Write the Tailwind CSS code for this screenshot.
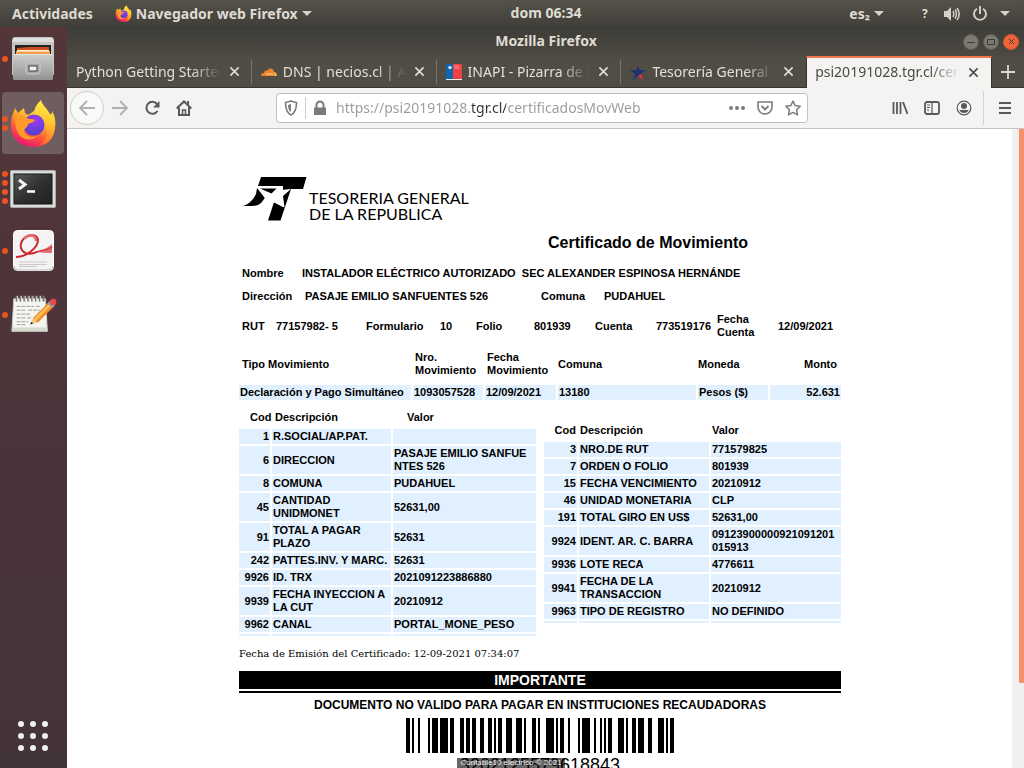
<!DOCTYPE html>
<html lang="es">
<head>
<meta charset="utf-8">
<title>Mozilla Firefox</title>
<script src="https://cdn.jsdelivr.net/npm/@tailwindcss/browser@4"></script>
</head>
<body class="h-screen overflow-hidden flex flex-col bg-[#4a3439] font-['Noto_Sans',sans-serif] text-sm">

<svg class="absolute size-0" aria-hidden="true">
  <defs>
    <linearGradient id="flame" x1=".8" y1="0" x2=".3" y2="1"><stop offset="0" stop-color="#fff44f"/><stop offset=".35" stop-color="#ffb02c"/><stop offset=".65" stop-color="#ff5a36"/><stop offset="1" stop-color="#e5107a"/></linearGradient>
    <linearGradient id="tail" x1=".6" y1="0" x2=".5" y2="1"><stop offset="0" stop-color="#fff04a"/><stop offset=".5" stop-color="#ffc52e"/><stop offset="1" stop-color="#ff6a2c"/></linearGradient>
    <radialGradient id="globe" cx=".55" cy=".25" r=".8"><stop offset="0" stop-color="#a03cf0"/><stop offset="1" stop-color="#4a3fd0"/></radialGradient>
    <linearGradient id="steel" x1="0" y1="0" x2="0" y2="1"><stop offset="0" stop-color="#cfcfcd"/><stop offset="1" stop-color="#929290"/></linearGradient>
    <linearGradient id="screen" x1="0" y1="0" x2="1" y2="1"><stop offset="0" stop-color="#5b5d5c"/><stop offset=".5" stop-color="#303232"/><stop offset="1" stop-color="#1d1f1f"/></linearGradient>
    <symbol id="firefox" viewBox="0 0 48 48">
      <path fill="url(#flame)" d="M5 12l1-3 3 5 6-5 1 5 3 2 6-4 6 2 6 4 7 7c4 12-4 23-19 23C11 48 1 39 2 26c0-6 1-9 3-14z"/>
      <path fill="url(#tail)" d="M32 1c1 5 6 8 9 14 2 1 2-2 2-3 3 5 4 10 3 17-1 9-7 16-15 17 6-4 8-10 6-17-2-7-8-9-12-14 0-6 3-10 7-14z"/>
      <circle cx="25" cy="26" r="10.500" fill="url(#globe)"/>
      <path fill="#ff9a2b" d="M6 17c6-1 10 1 14 3 2 0 5 0 6 1-2 3-5 3-7 4 0 3-3 4-4 6 1 6 7 8 13 6-5 6-15 4-19-3-3-6-3-12-3-17z"/>
    </symbol>
    <symbol id="close" viewBox="0 0 12 12"><path d="M1.500 1.500l9 9M10.500 1.500l-9 9" fill="none" stroke="currentColor" stroke-width="1.700"/></symbol>
  </defs>
</svg>

<!-- System bar -->
<header class="h-[27px] shrink-0 flex items-center justify-between pl-3 pr-[14px] bg-linear-to-b from-[#55524a] to-[#403e39] text-[#dfdbd2] font-bold relative">
  <div class="flex items-center gap-[22px]">
    <button>Actividades</button>
    <button class="flex items-center gap-1"><svg class="size-[17px]"><use href="#firefox"/></svg>Navegador web Firefox
      <svg class="w-[10px] h-[5px]" viewBox="0 0 10 5"><path d="M0 0h10L5 5z" fill="#d5d1c9"/></svg></button>
  </div>
  <button class="absolute left-1/2 top-[3px] w-[72px] -ml-[2px] text-[14px] leading-5 whitespace-nowrap">dom 06:34</button>
  <div class="flex items-center">
    <button class="flex items-center gap-1">es₂ <svg class="w-[10px] h-[5px]" viewBox="0 0 10 5"><path d="M0 0h10L5 5z" fill="#d5d1c9"/></svg></button>
    <span class="ml-[38px] w-[10px] text-xs">?</span>
    <button aria-label="Volumen" class="ml-3"><svg class="w-4 h-4" viewBox="0 0 16 16"><path d="M0 5h3l4-4v14l-4-4H0z" fill="#d5d1c9"/><path d="M9 5c1 2 1 4 0 6M11 3.500c2 3 2 6 0 9M13 2c3 4 3 8 0 12" fill="none" stroke="#d5d1c9" stroke-width="1.500"/></svg></button>
    <button aria-label="Sistema" class="ml-3 flex items-center gap-3"><svg class="size-4" viewBox="0 0 16 16"><path d="M5 2.700a6 6 0 1 0 6 0M8 0v8" fill="none" stroke="#d5d1c9" stroke-width="1.900"/></svg>
      <svg class="w-[10px] h-[5px]" viewBox="0 0 10 5"><path d="M0 0h10L5 5z" fill="#d5d1c9"/></svg></button>
  </div>
</header>

<div class="flex-1 min-h-0 flex">
  <!-- Dock -->
  <nav class="w-[67px] shrink-0 flex flex-col gap-[2px] px-[2px] pt-px bg-linear-to-b from-[#543639] via-[#4b3439] to-[#43333a]">
    <button aria-label="Archivos" class="h-[62px] w-[62px] flex items-center">
      <span class="w-[7px] flex flex-col gap-[3px]"><i class="size-[6px] rounded-full bg-[#e95420]"></i></span>
      <svg class="w-[48px] h-[48px]" viewBox="0 0 48 48"><path d="M4 3q0-1 2-1h36q2 0 2 1l1 3v34H3V6z" fill="#c5c5c3"/><path d="M4 3h40l1 4H3z" fill="#dededc"/><path d="M6 10h36v10H6z" fill="#222"/><path d="M8 13l12-1h20v8H8z" fill="#c9501e"/><path d="M7 16h34v4H7z" fill="#f4a04a"/><path d="M8 15h32v1.500H8z" fill="#fff0d8"/><path d="M5 19h38l1 3v22q0 1-2 1H6q-2 0-2-1V22z" fill="url(#steel)"/><path d="M5 19h38v1H5z" fill="#e5e5e4"/><rect x="17" y="28" width="14" height="11" rx="2" fill="#a8a8a6" stroke="#cacac8"/><rect x="20" y="31" width="8" height="5" fill="#eee" stroke="#444"/></svg>
    </button>
    <button aria-label="Firefox" class="h-[62px] w-[62px] flex items-center rounded bg-[#705d5f]">
      <span class="w-[7px] flex flex-col gap-[3px]"><i class="size-[6px] rounded-full bg-[#e95420]"></i><i class="size-[6px] rounded-full bg-[#e95420]"></i></span>
      <svg class="size-[48px]"><use href="#firefox"/></svg>
    </button>
    <button aria-label="Terminal" class="h-[62px] w-[62px] flex items-center">
      <span class="w-[7px] flex flex-col gap-[3px]"><i class="size-[6px] rounded-full bg-[#e95420]"></i><i class="size-[6px] rounded-full bg-[#e95420]"></i><i class="size-[6px] rounded-full bg-[#e95420]"></i><i class="size-[6px] rounded-full bg-[#e95420]"></i></span>
      <svg class="size-[48px]" viewBox="0 0 48 48"><rect x="1.500" y="7.500" width="45" height="37" rx="1" fill="#d9dbd9" stroke="#a9aaa9"/><rect x="5" y="11" width="38" height="30" fill="url(#screen)" stroke="#151616"/><path d="M10 17l6 4.500-6 4.500" fill="none" stroke="#f4f4f4" stroke-width="3"/><path d="M18 28.500h8" stroke="#fff" stroke-width="2.500"/></svg>
    </button>
    <button aria-label="Visor de documentos" class="h-[62px] w-[62px] flex items-center">
      <span class="w-[7px] flex flex-col"><i class="size-[6px] rounded-full bg-[#e95420]"></i></span>
      <svg class="size-[48px]" viewBox="0 0 48 48"><rect x="4.500" y="3.500" width="40" height="40" rx="4" fill="#f3f3f3" stroke="#fff"/><path d="M5 39q0 4 4 4h31q4 0 4-4" fill="none" stroke="#bbb"/><path d="M7 30c10 0 22-9 22-17 0-7-12-6-16 1-4 8 2 15 12 12 7-3 12-2 18-6" fill="none" stroke="#c9282f" stroke-width="2"/><path d="M15 12c4-5 12-5 12 2" fill="none" stroke="#e5676a" stroke-width="2.500"/><path d="M26 24c7 1 12-3 17-7v9c-6 0-11 0-17-2z" fill="#dc5055" opacity=".8"/><path d="M10 35h28M10 37.500h28M10 39.500h18" stroke="#c9c9c9" stroke-width="1"/></svg>
    </button>
    <button aria-label="Editor de textos" class="h-[62px] w-[62px] flex items-center">
      <span class="w-[7px] flex flex-col"><i class="size-[6px] rounded-full bg-[#e95420]"></i></span>
      <svg class="size-[48px]" viewBox="0 2 50 50"><path d="M5 10h33l2 34H3z" fill="#f5f5f1" stroke="#c9c9c4"/><path d="M4 40h35v4H3z" fill="#d5d8cd"/><path d="M8 7v6M12 7v6M16 7v6M20 7v6M24 7v6M28 7v6M32 7v6M36 7v6" stroke="#777" stroke-width="2"/><path d="M9 7v6M13 7v6M17 7v6M21 7v6M25 7v6M29 7v6M33 7v6" stroke="#e3e3e3"/><path d="M8 18h18M28 18h5M8 22h10M20 22h12M8 26h14M8 30h9M19 30h4M8 34h12M8 37h10" stroke="#999" stroke-dasharray="4 1"/><path d="M22 37l3-7 5 5z" fill="#edc98d"/><path d="M25 30L41 14l5 5-16 16z" fill="#f38d25"/><path d="M26 31L42 15l2 2-16 16z" fill="#ffbd62"/><path d="M22 37l1.500-3 1.500 1.500z" fill="#111"/><path d="M40 15l3-3 5 5-3 3z" fill="#9a9a9a"/><circle cx="46" cy="13.500" r="3.300" fill="#e5474b"/></svg>
    </button>
    <button aria-label="Mostrar aplicaciones" class="mt-auto mb-[17px] ml-4 grid grid-cols-3 gap-[6px] w-[30px]">
      <i class="size-[6px] rounded-full bg-[#f0eeee]"></i><i class="size-[6px] rounded-full bg-[#f0eeee]"></i><i class="size-[6px] rounded-full bg-[#f0eeee]"></i>
      <i class="size-[6px] rounded-full bg-[#f0eeee]"></i><i class="size-[6px] rounded-full bg-[#f0eeee]"></i><i class="size-[6px] rounded-full bg-[#f0eeee]"></i>
      <i class="size-[6px] rounded-full bg-[#f0eeee]"></i><i class="size-[6px] rounded-full bg-[#f0eeee]"></i><i class="size-[6px] rounded-full bg-[#f0eeee]"></i>
    </button>
  </nav>

  <!-- Browser window -->
  <main class="flex-1 min-w-0 flex flex-col bg-white">
    <div class="h-[29px] shrink-0 flex items-center bg-linear-to-b from-[#3d3c38] to-[#4c4942] pr-[5px] pl-[62px]">
      <h1 class="flex-1 pb-[2px] text-center font-bold text-[#dfdbd2]">Mozilla Firefox</h1>
      <div class="flex gap-1">
        <button aria-label="Minimizar" class="size-4 rounded-full bg-[#7b7971] border border-[#5f5d57] flex items-center justify-center"><svg class="size-2" viewBox="0 0 8 8"><path d="M0 4.500h8" stroke="#3c3b37"/></svg></button>
        <button aria-label="Maximizar" class="size-4 rounded-full bg-[#7b7971] border border-[#5f5d57] flex items-center justify-center"><svg class="size-2" viewBox="0 0 8 8"><path d="M.5 1.500h7v5h-7z" fill="none" stroke="#3c3b37"/></svg></button>
        <button aria-label="Cerrar" class="size-4 rounded-full bg-[#ee6338] border border-[#c95b37] flex items-center justify-center text-[#3c3b37]"><svg class="size-[7px]"><use href="#close"/></svg></button>
      </div>
    </div>

    <div class="h-8 shrink-0 flex bg-[#504d45] text-[#e3dfd7]" role="tablist">
      <div role="tab" class="relative flex-1 min-w-0 flex items-center pl-[9px] pr-3 border-b border-[#35342f]">
        <span class="flex-1 overflow-hidden whitespace-nowrap [mask-image:linear-gradient(to_right,black_calc(100%-30px),transparent)]">Python Getting Started</span>
        <button aria-label="Cerrar pestaña" class="ml-2"><svg class="size-[11px]"><use href="#close"/></svg></button>
        <i class="absolute right-0 top-1 h-6 w-px bg-[#7a776f]"></i>
      </div>
      <div role="tab" class="relative flex-1 min-w-0 flex items-center pl-[9px] pr-3 border-b border-[#35342f]">
        <svg class="w-4 h-4 mr-[6px] shrink-0" viewBox="0 0 16 16"><path d="M0 12c0-2 1-3 3-3 0-2 2-3 3-2 2-4 7-3 7 1l-1 4z" fill="#f48120"/><path d="M12 12l1-4c2 0 3 2 3 4z" fill="#faad3f"/><path d="M5 10h7" stroke="#fff" stroke-width=".7"/></svg>
        <span class="flex-1 overflow-hidden whitespace-nowrap [mask-image:linear-gradient(to_right,black_calc(100%-30px),transparent)]">DNS | necios.cl | Account</span>
        <button aria-label="Cerrar pestaña" class="ml-2"><svg class="size-[11px]"><use href="#close"/></svg></button>
        <i class="absolute right-0 top-1 h-6 w-px bg-[#7a776f]"></i>
      </div>
      <div role="tab" class="relative flex-1 min-w-0 flex items-center pl-[9px] pr-3 border-b border-[#35342f]">
        <svg class="w-4 h-4 mr-[6px] shrink-0" viewBox="0 0 16 16"><path d="M0 0h7v16H0z" fill="#0d68b0"/><path d="M7 0h9v16H7z" fill="#ef4144"/><path d="M0 15h16v1H0z" fill="#eee"/><path d="M2 3l2-1 2 1-1 2H3z" fill="#e4edf5"/><path d="M8 2h5M8 4h6" stroke="#f7a5a5" stroke-width=".8"/></svg>
        <span class="flex-1 overflow-hidden whitespace-nowrap [mask-image:linear-gradient(to_right,black_calc(100%-30px),transparent)]">INAPI - Pizarra de Pagos</span>
        <button aria-label="Cerrar pestaña" class="ml-2"><svg class="size-[11px]"><use href="#close"/></svg></button>
        <i class="absolute right-0 top-1 h-6 w-px bg-[#7a776f]"></i>
      </div>
      <div role="tab" class="relative flex-1 min-w-0 flex items-center pl-[9px] pr-3 border-b border-[#35342f]">
        <svg class="w-4 h-4 mr-[6px] shrink-0" viewBox="0 0 16 16"><path d="M8 0l2 6h6l-5 3.500 2 6.500-5-4z" fill="#ef2c3c"/><path d="M8 1L6.500 6H0l5 4-2 6 5-4 3-2 5-4h-6z" fill="#1f3472"/></svg>
        <span class="flex-1 overflow-hidden whitespace-nowrap [mask-image:linear-gradient(to_right,black_calc(100%-30px),transparent)]">Tesorería General de la República</span>
        <button aria-label="Cerrar pestaña" class="ml-2"><svg class="size-[11px]"><use href="#close"/></svg></button>
      </div>
      <div role="tab" aria-selected="true" class="flex-1 min-w-0 flex items-center pl-2 pr-3 pb-[2px] border-t-2 border-x border-t-[#f2764b] border-x-[#35342f] bg-[#f4f3f2] text-[#4b4a47]">
        <span class="flex-1 overflow-hidden whitespace-nowrap [mask-image:linear-gradient(to_right,black_calc(100%-30px),transparent)]">psi20191028.tgr.cl/certificados</span>
        <button aria-label="Cerrar pestaña" class="ml-2"><svg class="size-[11px]"><use href="#close"/></svg></button>
      </div>
      <button aria-label="Nueva pestaña" class="w-8 shrink-0 flex items-center justify-center border-b border-[#35342f]"><svg class="size-[14px]" viewBox="0 0 14 14"><path d="M7 0v14M0 7h14" stroke="#dedad2" stroke-width="1.800"/></svg></button>
    </div>

    <div class="h-[41px] shrink-0 flex items-center bg-[#f4f3f2] border-b border-[#c6c4c1] pl-[3px] pr-3 text-[#5a5957]">
      <button aria-label="Atrás" class="size-[34px] rounded-full border border-[#cfcdca] bg-[#f9f9f8] flex items-center justify-center text-[#b1b0af]"><svg class="size-4" viewBox="0 0 16 16"><path d="M16 8H1M8 1L1 8l7 7" fill="none" stroke="currentColor" stroke-width="1.800"/></svg></button>
      <button aria-label="Adelante" class="ml-2 text-[#b1b0af]"><svg class="size-4" viewBox="0 0 16 16"><path d="M0 8h15M8 1l7 7-7 7" fill="none" stroke="currentColor" stroke-width="1.800"/></svg></button>
      <button aria-label="Recargar" class="ml-4"><svg class="size-4" viewBox="0 0 16 16"><path d="M13.500 11A6 6 0 1 1 13 4" fill="none" stroke="currentColor" stroke-width="2"/><path d="M15.500 1v6.500H9z" fill="currentColor"/></svg></button>
      <button aria-label="Inicio" class="ml-4"><svg class="size-4" viewBox="0 0 16 16"><path d="M.7 8.500L8 1.500l7.300 7M3 7.500V15h10V7.500" fill="none" stroke="currentColor" stroke-width="2"/><path d="M6.500 15v-5h3v5" fill="none" stroke="currentColor" stroke-width="1.500"/><path d="M11 1h2v4l-2-2z" fill="currentColor"/></svg></button>
      <div class="ml-[84px] flex-1 h-[30px] flex items-center rounded border border-[#c3c1be] bg-white px-[6px] text-[#7c7b7a]">
        <svg class="w-4 h-4 shrink-0" viewBox="0 0 16 16"><path d="M8 1L2.500 2.500C2.500 9 4 13 8 15c4-2 5.500-6 5.500-12.500z" fill="none" stroke="currentColor" stroke-width="1.600"/><path d="M8 4v8c-2-1-3-4-3-7z" fill="currentColor"/></svg>
        <i class="mx-[6px] w-px h-[22px] bg-[#cfcecd]"></i>
        <svg class="w-4 h-4 shrink-0" viewBox="0 0 16 16"><path d="M2 7.500h12V15H2z" fill="currentColor"/><path d="M4.500 8V5a3.500 3.500 0 0 1 7 0v3" fill="none" stroke="currentColor" stroke-width="2"/></svg>
        <input aria-label="Dirección web" class="ml-2 flex-1 min-w-0 outline-none text-transparent bg-clip-text bg-[linear-gradient(to_right,#9b9a99_135px,#333_135px,#333_170px,#9b9a99_170px)]" value="https://psi20191028.tgr.cl/certificadosMovWeb">
        <button aria-label="Acciones de página"><svg class="size-4" viewBox="0 0 16 16"><circle cx="2" cy="8" r="2" fill="currentColor"/><circle cx="8" cy="8" r="2" fill="currentColor"/><circle cx="14" cy="8" r="2" fill="currentColor"/></svg></button>
        <button aria-label="Pocket" class="ml-3"><svg class="size-4" viewBox="0 0 16 16"><path d="M1 2h14v5a7 7 0 0 1-14 0z" fill="none" stroke="currentColor" stroke-width="1.600"/><path d="M4.500 6L8 9.500 11.500 6" fill="none" stroke="currentColor" stroke-width="1.900"/></svg></button>
        <button aria-label="Marcador" class="ml-3"><svg class="size-4" viewBox="0 0 16 16"><path d="M8 1l2.200 4.600 5 .7-3.600 3.500.9 5L8 12.400l-4.500 2.400.9-5L.8 6.300l5-.7z" fill="none" stroke="currentColor" stroke-width="1.500" stroke-linejoin="round"/></svg></button>
      </div>
      <div class="ml-[84px] flex items-center gap-4">
        <button aria-label="Biblioteca"><svg class="size-4" viewBox="0 0 16 16"><path d="M1.500 2v12M5 2v12M8.500 2v12M11 2l4.500 12" stroke="currentColor" stroke-width="1.800"/></svg></button>
        <button aria-label="Barra lateral"><svg class="size-4" viewBox="0 0 16 16"><rect x="1" y="2" width="14" height="12" rx="2" fill="none" stroke="currentColor" stroke-width="1.800"/><path d="M8 2v12M3 5h3M3 7.500h3M3 10h2" stroke="currentColor" stroke-width="1.200"/></svg></button>
        <button aria-label="Cuenta"><svg class="size-4" viewBox="0 0 16 16"><circle cx="8" cy="8" r="6.800" fill="none" stroke="currentColor" stroke-width="1.200"/><circle cx="8" cy="6" r="3" fill="currentColor"/><path d="M3.500 10h9c-1 4-8 4-9 0z" fill="currentColor"/></svg></button>
      </div>
      <i class="ml-[11px] w-px h-[34px] bg-[#d5d3d1]"></i>
      <button aria-label="Menú" class="ml-[14px]"><svg class="w-[14px] h-4" viewBox="0 0 14 16"><path d="M1 3h12M1 8h12M1 13h12" stroke="currentColor" stroke-width="1.800"/></svg></button>
    </div>

    <div class="flex-1 min-h-0 flex">
      <div class="flex-1 overflow-hidden pl-px">
        <article class="mx-auto w-[602px] pt-12 text-[11px] leading-[13px] font-bold font-['Liberation_Sans',sans-serif] text-black">
          <div class="flex pl-1">
            <svg class="w-[64px] h-[44px] shrink-0" viewBox="0 0 64 44">
              <path d="M18 0h45.500L60 12H48L37.500 43.500H25L31 25l9 5V9H15z" fill="#000"/>
              <path d="M14 11l-1 6C10 23 6 27 0 29h9c4 0 7-1 9-3l4-5z" fill="#000"/>
              <path d="M14 9.500L28 16l6-6h4v3l10-1-8 7 1.500 11.500L31 25.500 17 29l5-8z" fill="#fff"/>
              <path d="M17 11.500h16.500L28.500 16.500z" fill="#000"/>
            </svg>
            <p class="pt-[13px] pl-[2px] text-base leading-4 font-normal font-['Lato',sans-serif] whitespace-nowrap">TESORERIA GENERAL<br>DE LA REPUBLICA</p>
          </div>
          <h2 class="mt-[9px] pl-[309px] text-base leading-6">Certificado de Movimiento</h2>

          <dl class="mt-3 ml-[3px] grid grid-cols-[60px_1fr]"><dt>Nombre</dt><dd class="whitespace-pre">INSTALADOR ELÉCTRICO AUTORIZADO  SEC ALEXANDER ESPINOSA HERNÁNDE</dd></dl>
          <dl class="mt-[10px] ml-[3px] grid grid-cols-[63px_236px_63px_1fr]"><dt>Dirección</dt><dd>PASAJE EMILIO SANFUENTES 526</dd><dt>Comuna</dt><dd>PUDAHUEL</dd></dl>
          <dl class="mt-[10px] ml-[3px] grid grid-cols-[34px_90px_74px_36px_58px_61px_61px_61px_61px_1fr] items-center whitespace-nowrap"><dt>RUT</dt><dd>77157982- 5</dd><dt>Formulario</dt><dd>10</dd><dt>Folio</dt><dd>801939</dd><dt>Cuenta</dt><dd>773519176</dd><dt>Fecha<br>Cuenta</dt><dd>12/09/2021</dd></dl>

          <div class="mt-1 -mx-[2px]">
            <table class="w-full table-fixed border-separate border-spacing-[2px] whitespace-nowrap">
              <colgroup><col class="w-[172px]"><col class="w-[70px]"><col class="w-[71px]"><col class="w-[138px]"><col class="w-[70px]"><col class="w-[71px]"></colgroup>
              <thead class="text-left"><tr class="h-[38px]"><th class="pl-[3px]">Tipo Movimiento</th><th class="pl-[2px]">Nro.<br>Movimiento</th><th class="pl-[2px]">Fecha<br>Movimiento</th><th>Comuna</th><th>Moneda</th><th class="pr-1 text-right">Monto</th></tr></thead>
              <tbody><tr class="*:bg-[#e1f0ff] *:p-px"><td>Declaración y Pago Simultáneo</td><td>1093057528</td><td>12/09/2021</td><td>13180</td><td>Pesos ($)</td><td class="text-right">52.631</td></tr></tbody>
            </table>
          </div>

          <div class="mt-1 -mx-[2px] flex items-start gap-1">
            <table class="w-[301px] table-fixed border-separate border-spacing-[2px]">
              <colgroup><col class="w-[31px]"><col class="w-[119px]"><col class="w-[143px]"></colgroup>
              <thead class="text-left"><tr class="h-[19px]"><th class="pl-[11px]">Cod</th><th class="pl-[3px]">Descripción</th><th class="pl-[14px]">Valor</th></tr></thead>
              <tbody class="*:*:bg-[#e1f0ff] *:*:p-px *:*:first:text-right">
                <tr><td>1</td><td>R.SOCIAL/AP.PAT.</td><td></td></tr>
                <tr><td>6</td><td>DIRECCION</td><td>PASAJE EMILIO SANFUE<br>NTES 526</td></tr>
                <tr><td>8</td><td>COMUNA</td><td>PUDAHUEL</td></tr>
                <tr><td>45</td><td>CANTIDAD UNIDMONET</td><td>52631,00</td></tr>
                <tr><td>91</td><td>TOTAL A PAGAR PLAZO</td><td>52631</td></tr>
                <tr><td>242</td><td class="whitespace-nowrap">PATTES.INV. Y MARC.</td><td>52631</td></tr>
                <tr><td>9926</td><td>ID. TRX</td><td>2021091223886880</td></tr>
                <tr><td>9939</td><td>FECHA INYECCION A LA CUT</td><td>20210912</td></tr>
                <tr><td>9962</td><td>CANAL</td><td>PORTAL_MONE_PESO</td></tr>
                <tr><td></td><td></td><td></td></tr>
              </tbody>
            </table>
            <table class="mt-[13px] w-[301px] table-fixed border-separate border-spacing-[2px]">
              <colgroup><col class="w-[33px]"><col class="w-[130px]"><col class="w-[130px]"></colgroup>
              <thead class="text-left"><tr class="h-[19px]"><th class="pr-px text-right">Cod</th><th class="pl-px">Descripción</th><th class="pl-px">Valor</th></tr></thead>
              <tbody class="*:*:bg-[#e1f0ff] *:*:p-px *:*:first:text-right">
                <tr><td>3</td><td>NRO.DE RUT</td><td>771579825</td></tr>
                <tr><td>7</td><td>ORDEN O FOLIO</td><td>801939</td></tr>
                <tr><td>15</td><td>FECHA VENCIMIENTO</td><td>20210912</td></tr>
                <tr><td>46</td><td>UNIDAD MONETARIA</td><td>CLP</td></tr>
                <tr><td>191</td><td>TOTAL GIRO EN US$</td><td>52631,00</td></tr>
                <tr><td>9924</td><td>IDENT. AR. C. BARRA</td><td>09123900000921091201<br>015913</td></tr>
                <tr><td>9936</td><td>LOTE RECA</td><td>4776611</td></tr>
                <tr><td>9941</td><td>FECHA DE LA TRANSACCION</td><td>20210912</td></tr>
                <tr><td>9963</td><td>TIPO DE REGISTRO</td><td>NO DEFINIDO</td></tr>
                <tr><td></td><td></td><td></td></tr>
              </tbody>
            </table>
          </div>

          <p class="mt-[10px] text-[10px] leading-3 font-normal font-['DejaVu_Serif',serif]">Fecha de Emisión del Certificado: 12-09-2021 07:34:07</p>
          <h3 class="mt-[11px] h-[18px] bg-black text-white text-center text-sm leading-[18px]">IMPORTANTE</h3>
          <div class="mt-[2px] h-[2px] bg-black"></div>
          <p class="mt-1 text-center text-xs leading-4">DOCUMENTO NO VALIDO PARA PAGAR EN INSTITUCIONES RECAUDADORAS</p>
          <svg class="mt-[5px] mx-auto block w-[268px] h-[35px]" viewBox="0 0 134 35" preserveAspectRatio="none" shape-rendering="crispEdges" role="img" aria-label="Código de barras"><path id="bars" fill="#000"/></svg>
          <div class="relative">
            <p class="mt-[2px] text-center text-lg leading-5 font-normal">3202125579618843</p>
            <p class="absolute left-[218px] top-[3px] w-[108px] h-4 bg-black/60 text-[#eee] text-center text-[8px] leading-[9px] font-normal whitespace-nowrap">Contable10 electrico © 2021</p>
          </div>
        </article>
      </div>
      <div class="w-3 shrink-0 bg-[#f1f0ee] flex flex-col items-end"><div class="w-[5px] h-[554px] rounded-[1px] bg-[#f4906b]"></div></div>
    </div>
  </main>
</div>

<script>
  // Code 128 bar and gap widths, one group per symbol
  const symbols = ['211214', '113141', '232121', '222221', '112232', '311321', '134111', '221411', '421211', '112331', '122132', '2331112'];
  let x = 0, d = '';
  [...symbols.join('')].forEach((n, i) => {
    if (i % 2 === 0) d += `M${x} 0h${n}v35h-${n}z`;
    x += Number(n);
  });
  document.getElementById('bars').setAttribute('d', d);
</script>
</body>
</html>
